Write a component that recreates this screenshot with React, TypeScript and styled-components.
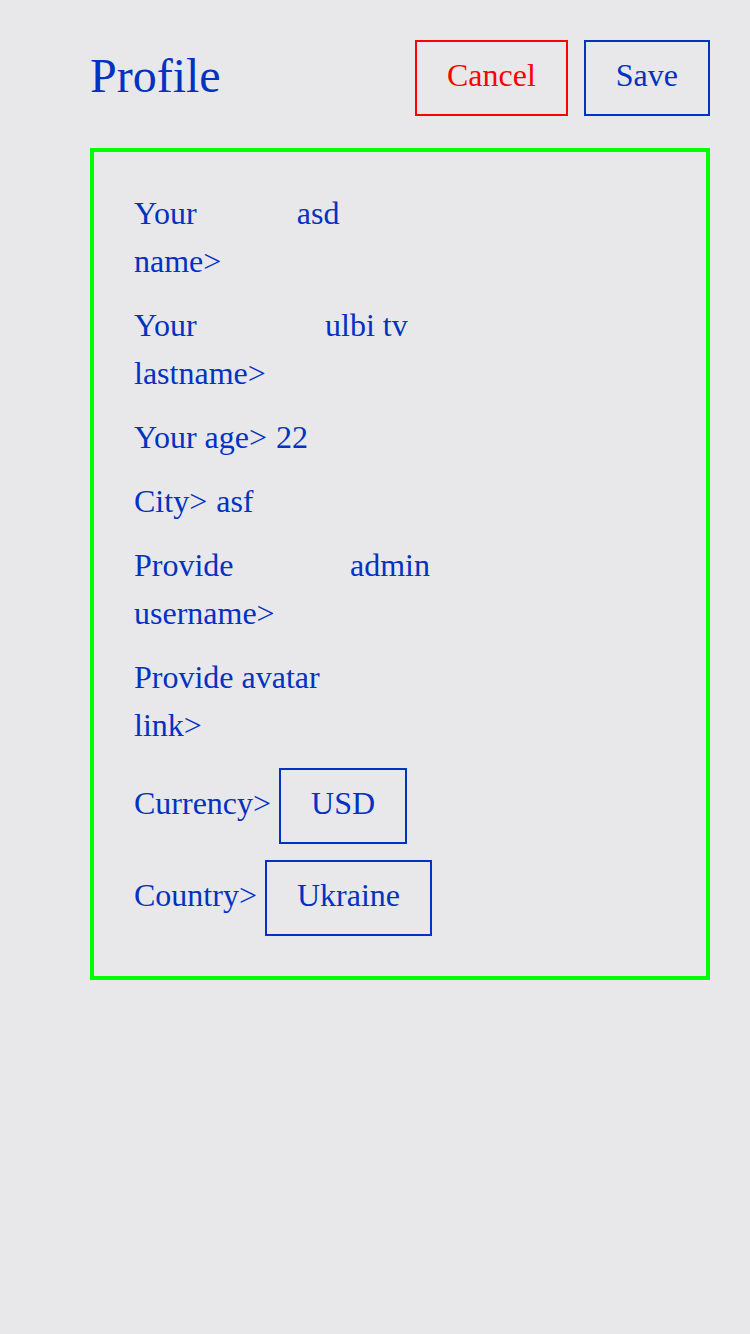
import React from "react";
import styled, { createGlobalStyle } from "styled-components";

const Global = createGlobalStyle`
  html, body { margin: 0; padding: 0; background: #e8e8ea; }
  body { font-family: "Liberation Serif", "Times New Roman", serif; color: #0232c2; }
  * { box-sizing: border-box; }
`;

const Page = styled.div`
  min-height: 1334px;
  padding: 40px 40px 40px 90px;
  display: flex;
  flex-direction: column;
  gap: 32px;
`;

const Header = styled.div`
  display: flex;
  align-items: center;
  justify-content: space-between;
`;

const Title = styled.h1`
  margin: -4px 0 0;
  font-size: 48px;
  line-height: 72px;
  font-weight: 400;
  color: #0232c2;
`;

const Actions = styled.div`
  display: flex;
  gap: 16px;
`;

const Button = styled.button<{ $red?: boolean }>`
  font-family: inherit;
  font-size: 32px;
  line-height: 48px;
  padding: 9px 30px 15px;
  background: transparent;
  border: 2px solid ${(p) => (p.$red ? "#ff0000" : "#0232c2")};
  color: ${(p) => (p.$red ? "#ff0000" : "#0232c2")};
  margin: 0;
  cursor: pointer;
`;

const Card = styled.div`
  border: 4px solid #00ff00;
  padding: 40px;
  display: flex;
  flex-direction: column;
  gap: 16px;
`;

const Row = styled.div<{ $center?: boolean }>`
  display: flex;
  align-items: ${(p) => (p.$center ? "center" : "flex-start")};
  gap: 8px;
  font-size: 32px;
  line-height: 48px;
`;

const Label = styled.span`
  flex: 0 1 auto;
  margin-top: -3px;
  padding-bottom: 3px;
`;

const Input = styled.input`
  flex: 0 1 380px;
  width: 380px;
  min-width: 0;
  height: 48px;
  font-family: inherit;
  font-size: 32px;
  line-height: 42px;
  color: #0232c2;
  background: transparent;
  border: none;
  outline: none;
  padding: 0 0 6px 1px;
  margin: 0;
`;

const SelectBox = styled.button`
  font-family: inherit;
  font-size: 32px;
  line-height: 48px;
  padding: 9px 30px 15px;
  background: transparent;
  border: 2px solid #0232c2;
  color: #0232c2;
  margin: 0;
  flex: none;
`;

const fields = [
  { label: "Your name>", value: "asd" },
  { label: "Your lastname>", value: "ulbi tv" },
  { label: "Your age>", value: "22" },
  { label: "City>", value: "asf" },
  { label: "Provide username>", value: "admin" },
  { label: "Provide avatar link>", value: "" },
];

export default function App() {
  return (
    <>
      <Global />
      <Page>
        <Header>
          <Title>Profile</Title>
          <Actions>
            <Button $red>Cancel</Button>
            <Button>Save</Button>
          </Actions>
        </Header>
        <Card>
          {fields.map((f) => (
            <Row key={f.label}>
              <Label>{f.label}</Label>
              <Input defaultValue={f.value} />
            </Row>
          ))}
          <Row $center>
            <Label>Currency&gt;</Label>
            <SelectBox>USD</SelectBox>
          </Row>
          <Row $center>
            <Label>Country&gt;</Label>
            <SelectBox>Ukraine</SelectBox>
          </Row>
        </Card>
      </Page>
    </>
  );
}
